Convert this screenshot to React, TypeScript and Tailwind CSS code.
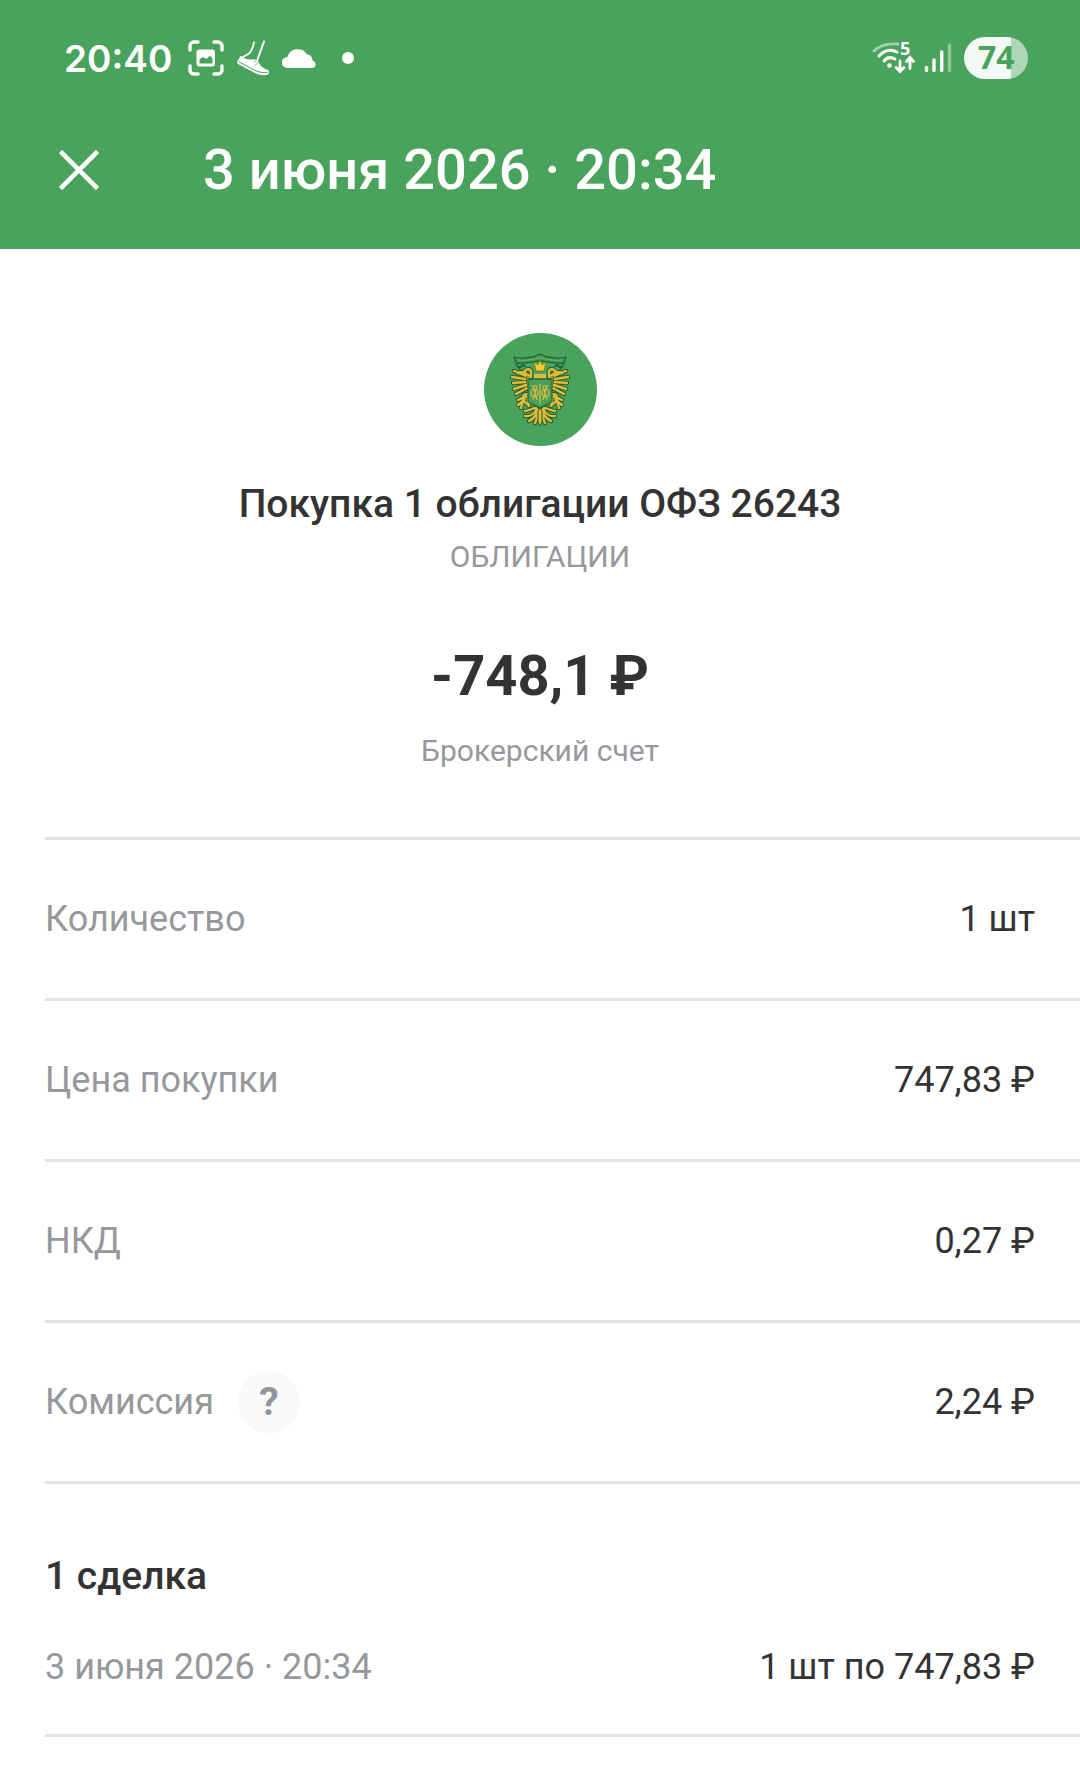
import type { ReactNode } from 'react'

const details: { label: string; value: string; hint?: boolean }[] = [
  { label: 'Количество', value: '1 шт' },
  { label: 'Цена покупки', value: '747,83 ₽' },
  { label: 'НКД', value: '0,27 ₽' },
  { label: 'Комиссия', value: '2,24 ₽', hint: true },
]

function ScreenshotIcon() {
  return (
    <svg width="36" height="36" viewBox="0 0 36 36" fill="none" aria-hidden="true">
      <path
        d="M2 10V6a4 4 0 0 1 4-4h4M26 2h4a4 4 0 0 1 4 4v4M34 26v4a4 4 0 0 1-4 4h-4M10 34H6a4 4 0 0 1-4-4v-4"
        stroke="white"
        strokeWidth="3.4"
        strokeLinecap="round"
      />
      <rect x="8.5" y="9.5" width="18.5" height="17" rx="3" fill="white" />
      <path d="M11.5 23.5v-4l3.5-2.5 3.5 2 3.5-3.5 2.5 3v5z" fill="#4aa35c" />
    </svg>
  )
}

function StepsIcon() {
  return (
    <svg width="34" height="36" viewBox="0 0 34 36" fill="none" aria-hidden="true">
      <path d="M18 2.5c-1 5-2.500 8.500-5 11L7 17" stroke="white" strokeWidth="1.8" strokeLinecap="round" />
      <path d="M28 1.5 21 21" stroke="white" strokeWidth="2" strokeLinecap="round" />
      <path
        d="M4.500 16c1 0 2 .5 3 1.500 3 2 6 2.500 9 1.800l4.500.7 4 6c2 2.500 4.500 3 7 4 1.500 1 1 3.500 0 4.500-4 1.500-9 .5-13-1.500L2 24c-1.500-1-1-2-.5-3z"
        fill="white"
      />
      <path d="M2.500 21.500 19 30.500c4 1.800 8 2.300 12.500 2" stroke="#4aa35c" strokeWidth="1" />
      <path d="M17.500 22.500l3-1.500M19 25l3-1.800" stroke="#4aa35c" strokeWidth=".7" />
    </svg>
  )
}

function CloudIcon() {
  return (
    <svg width="36" height="20" viewBox="0 0 36 20" fill="white" aria-hidden="true">
      <path d="M6 20a6 5.500 0 0 1-.5-11A10.500 10 0 0 1 25 6.500c3.500 0 5 2.500 5.500 6A4.300 4 0 0 1 31 20z" />
    </svg>
  )
}

function WifiIcon() {
  return (
    <svg width="44" height="46" viewBox="0 -6 44 46" fill="none" strokeLinecap="round" aria-hidden="true">
      <path d="M2 10C8 4 15 2 26 3" stroke="white" strokeOpacity="0.5" strokeWidth="2.8" />
      <path d="M7 15C12 9 19 8 25 11" stroke="white" strokeWidth="3" />
      <path d="M12 20C15 16 19 16 23 18" stroke="white" strokeWidth="3" />
      <circle cx="17.5" cy="24.5" r="2.3" fill="white" />
      <path
        d="M28 20v10M24 26.500l4 4 4-4M38 27.500V17M34.500 20.500l3.500-4 3.500 4"
        stroke="white"
        strokeWidth="2.8"
      />
      <text x="28" y="14" fill="white" fontFamily="Open Sans, sans-serif" fontSize="18" fontWeight="700">
        5
      </text>
    </svg>
  )
}

function SignalIcon() {
  return (
    <svg width="28" height="30" viewBox="0 0 28 30" strokeWidth="3.4" strokeLinecap="round" stroke="white" aria-hidden="true">
      <path d="M2.500 24.500v3M10 17v10.500M17.700 9v18.500" />
      <path d="M25.500 2v25.500" strokeOpacity="0.4" />
    </svg>
  )
}

const wing = 'M21 25C15 20 11 19 8 21M16 24 4 19M15 27 2 25M15 30 3 31M16 33 4 37M17 36 6 42M18 26v11'
const head = 'M21 24v-4c0-3-4-4-6-1l-2 1.5'
const claw = 'M18 42c-5 0-6 3-5 7l-5 4M12 46l-4 2M13 49l-2 7M14 49l5 5M17 44l2 8M15 43l-1 6'
const tail = 'M27 57c-3 5-6 8-12 7M28 58c-2 6-4 8-9 11M29 59c-1 5-2 8-4 12M26 56c-4 0-7 3-11 3'

// One half of the eagle, mirrored for the other side
function EagleHalf() {
  return (
    <g strokeLinecap="round" strokeLinejoin="round">
      <g stroke="#27602f" strokeWidth="4.4">
        <path d={wing} />
        <path d={head} />
        <path d={claw} />
        <path d={tail} />
      </g>
      <g stroke="#dfbb38" strokeWidth="2.4">
        <path d={wing} />
        <path d={head} />
        <path d={claw} />
        <path d={tail} />
      </g>
    </g>
  )
}

function BondEmblem() {
  return (
    <svg width="60" height="76" viewBox="0 0 60 76" fill="none" aria-hidden="true">
      <EagleHalf />
      <g transform="matrix(-1 0 0 1 60 0)">
        <EagleHalf />
      </g>
      <path
        d="M4 5c6 2 13 1 19 0l7-3 7 3c6 1 13 2 19 0l-2 6c-6 1-11 0-17-1q-7-2-14 0c-6 1-11 2-17 1z"
        fill="#43994f"
        stroke="#1d6843"
        strokeWidth="1.3"
      />
      <path d="M8 8c6 1 11 0 16-1q6-2 12 0c5 1 10 2 16 1" stroke="#8fbd58" strokeWidth="1" strokeDasharray="2 1" />
      <path d="M6 12l3 4 4-3 3 2M54 12l-3 4-4-3-3 2" stroke="#1d6843" strokeWidth="2" />
      <path d="M24 10l4 3 2-5 2 5 4-3-2 9h-8z" fill="#f5cb32" stroke="#6b7421" strokeWidth=".7" />
      <path d="M24 22h12v5H24z" fill="#dfbb38" />
      <path d="M18 27h24v21c0 5-8 4-12 8-4-4-12-3-12-8z" fill="#48a05a" stroke="#27663b" strokeWidth="1.3" />
      <path d="M30 32v20M23 34l4 14M37 34l-4 14M27 34l-4 14M33 34l4 14M22 34h5M33 34h5" stroke="#dfbb38" strokeWidth="1.2" />
      <ellipse cx="24.5" cy="41" rx="3.5" ry="4" stroke="#dfbb38" strokeWidth="1.2" />
      <ellipse cx="35.5" cy="41" rx="3.5" ry="4" stroke="#dfbb38" strokeWidth="1.2" />
      <path d="M28 59l2-3 2 3v11l-2 4-2-4z" fill="#dfbb38" stroke="#27602f" strokeWidth="1" />
    </svg>
  )
}

function StatusBar() {
  return (
    <div className="flex h-29 items-center justify-between pr-13 pl-16">
      <div className="flex items-center">
        <span className="w-31 font-['Inter',sans-serif] text-[37px] font-semibold">20:40</span>
        <ScreenshotIcon />
        <span className="ml-3"><StepsIcon /></span>
        <span className="ml-3"><CloudIcon /></span>
        <span className="ml-6 size-3 rounded-full bg-white" />
      </div>
      <div className="flex items-center">
        <WifiIcon />
        <span className="ml-2"><SignalIcon /></span>
        <span className="ml-3 flex h-[42px] w-16 items-center rounded-full bg-linear-to-r from-[#f3faf5] from-74% to-[#b0d6b8] to-74% pb-0.5 pl-3.5 font-['Open_Sans',sans-serif] text-[32px] font-bold text-[#4aa35c]">
          74
        </span>
      </div>
    </div>
  )
}

function Row({ label, value }: { label: ReactNode; value: string }) {
  return (
    <div className="flex h-[161px] items-center justify-between border-b-3 border-[#e2e3e4] pr-[45px]">
      <dt className="flex items-center gap-6 text-[#96989c]">{label}</dt>
      <dd>{value}</dd>
    </div>
  )
}

export default function App() {
  return (
    <div className="min-h-screen bg-white font-['Roboto',sans-serif] text-[36px] leading-none text-[#333333]">
      <header className="bg-[#4aa35c] text-white">
        <StatusBar />
        <div className="flex h-[133px] items-start pt-[26px] pl-[59px]">
          <button type="button" aria-label="Закрыть" className="mt-2">
            <svg width="40" height="40" viewBox="0 0 40 40" stroke="white" strokeWidth="4.5" aria-hidden="true">
              <path d="M1.500 1.500l37 37M38.500 1.500l-37 37" />
            </svg>
          </button>
          <h1 className="ml-26 text-[56px] font-medium">3 июня 2026 · 20:34</h1>
        </div>
      </header>

      <main>
        <section className="flex flex-col items-center pt-21 text-center">
          <div className="flex size-[113px] items-center justify-center rounded-full bg-[#4aa35c]">
            <BondEmblem />
          </div>
          <h2 className="mt-[39px] text-[39px] font-medium">Покупка 1 облигации ОФЗ 26243</h2>
          <p className="mt-[18px] text-[30px] text-[#96989c]">ОБЛИГАЦИИ</p>
          <p className="mt-[76px] text-[56px] font-bold">-748,1 ₽</p>
          <p className="mt-8 text-[30px] text-[#96989c]">Брокерский счет</p>
        </section>

        <dl className="mt-[71px] ml-[45px] border-t-3 border-[#e2e3e4]">
          {details.map(({ label, value, hint }) => (
            <Row
              key={label}
              value={value}
              label={
                <>
                  {label}
                  {hint && (
                    <button
                      type="button"
                      aria-label="Подробнее о комиссии"
                      className="size-[62px] rounded-full bg-[#f8f9f9] text-[39px] font-bold text-[#9195a0]"
                    >
                      ?
                    </button>
                  )}
                </>
              }
            />
          ))}
        </dl>

        <section className="ml-[45px] border-b-3 border-[#e2e3e4] pt-[73px] pb-[49px]">
          <h3 className="text-[39px] font-medium">1 сделка</h3>
          <div className="mt-[53px] flex justify-between pr-[45px]">
            <span className="text-[#96989c]">3 июня 2026 · 20:34</span>
            <span>1 шт по 747,83 ₽</span>
          </div>
        </section>
      </main>
    </div>
  )
}
